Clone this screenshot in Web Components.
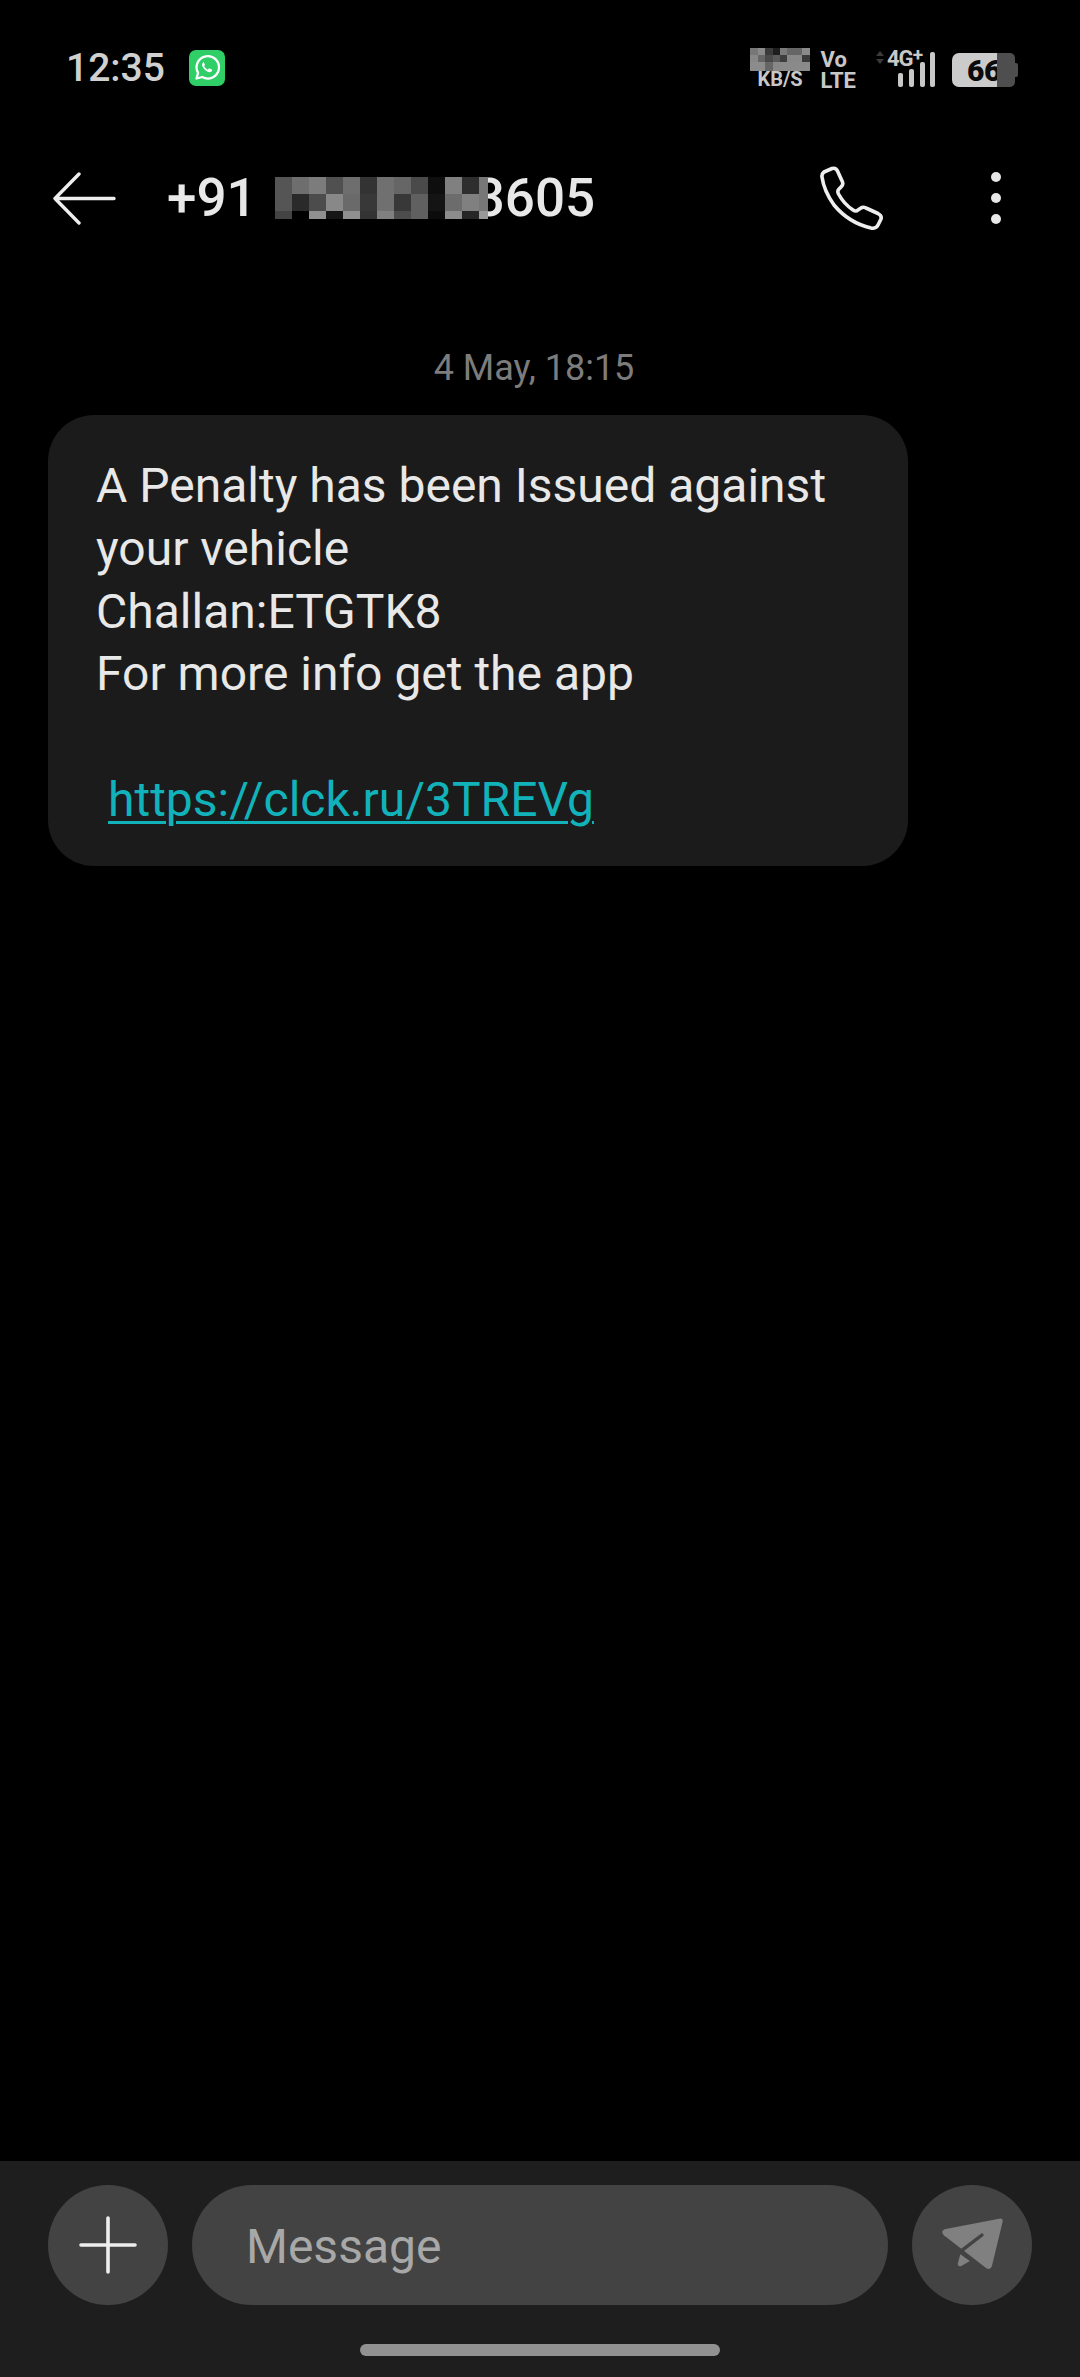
<!DOCTYPE html>
<html>
<head>
<meta charset="utf-8">
<style>
  html, body { margin:0; padding:0; background:#000; }
  body { font-family:Roboto, "Liberation Sans", sans-serif; }
</style>
</head>
<body>
<chat-screen>
  <status-bar slot="status"></status-bar>
  <chat-header slot="header"></chat-header>
  <msg-bubble date="4 May, 18:15">A Penalty has been Issued against
your vehicle
Challan:ETGTK8
For more info get the app<a href="#">https://clck.ru/3TREVg</a></msg-bubble>
  <msg-composer slot="composer"></msg-composer>
</chat-screen>

<script>
  // blurred squares that hide part of the number
  class PixelMosaic extends HTMLElement {
    connectedCallback() {
      const shadow = this.attachShadow({mode: 'open'});
      const cols = this.getAttribute('cols');
      const rows = this.getAttribute('rows');
      const colors = this.getAttribute('colors').trim().split(/\s+/);
      shadow.innerHTML = `
        <style>
          :host { display:inline-grid; grid-template-columns:${cols}; grid-template-rows:${rows}; }
        </style>
        ${colors.map(c => `<i style="background:${c}"></i>`).join('')}
      `;
    }
  }
  customElements.define('pixel-mosaic', PixelMosaic);

  class ChatScreen extends HTMLElement {
    connectedCallback() {
      const shadow = this.attachShadow({mode: 'open'});
      shadow.innerHTML = `
        <style>
          :host { display:flex; flex-direction:column; height:2377px; background:#000; color:#eee; overflow:hidden; }
          main { flex:1; padding:84px 0 0 48px; }
        </style>
        <slot name="status"></slot>
        <slot name="header"></slot>
        <main><slot></slot></main>
        <slot name="composer"></slot>
      `;
    }
  }
  customElements.define('chat-screen', ChatScreen);

  class StatusBar extends HTMLElement {
    connectedCallback() {
      const shadow = this.attachShadow({mode: 'open'});
      shadow.innerHTML = `
        <style>
          :host { display:flex; align-items:center; height:136px; padding:0 62px 0 66px; box-sizing:border-box; }
          .time { font-size:39px; font-weight:500; color:#d0d0d0; }
          .wa { margin-left:24px; display:block; }
          .right { margin-left:auto; display:flex; align-items:flex-start; height:38px; color:#c8c8c8; font-weight:700; font-size:20px; line-height:15px; }
          .speed { display:flex; flex-direction:column; align-items:center; width:59px; margin-top:-1px; }
          .speed span { margin-top:1px; }
          .volte { margin-left:11px; margin-top:0; line-height:21px; font-size:22px; }
          .net { margin-left:20px; position:relative; width:62px; height:38px; margin-top:1px; }
          .net svg { display:block; }
          .net span { position:absolute; left:11px; top:1px; font-size:22px; letter-spacing:-1px; }
          .net sup { font-size:19px; line-height:0; vertical-align:5px; }
          .batt { margin-left:14px; display:flex; align-items:center; width:66px; height:34px; margin-top:4px; }
          .batt b { display:flex; align-items:center; padding-left:15px; width:45px; height:34px; box-sizing:border-box; background:#cbcbcb; border-radius:7px 0 0 7px; color:#0c0c0c; font-size:30px; letter-spacing:-.5px; white-space:nowrap; }
          .batt i { display:block; width:18px; height:34px; background:#4e4e4e; border-radius:0 5px 5px 0; }
          .batt u { display:block; width:3px; height:14px; background:#4e4e4e; border-radius:0 2px 2px 0; }
        </style>
        <span class="time">12:35</span>
        <svg class="wa" width="36" height="36" viewBox="0 0 36 36">
          <rect width="36" height="36" rx="7" fill="#2fce67"/>
          <path d="M7.500 28.500l1.600-5.600a11.200 11.200 0 1 1 4.100 4.100z" fill="none" stroke="#fff" stroke-width="2.300" stroke-linejoin="round"/>
          <path d="M14.200 12.400c-1.400 1.100-1.500 2.900-.3 4.900 1.300 2.200 3.300 4 5.500 4.700 1.700.5 3.100 0 3.700-1.200.2-.6.1-1-.3-1.200l-2.200-1.100c-.4-.2-.7-.1-1 .3l-.7.9c-1.600-.6-3-1.900-3.800-3.400l.6-.8c.2-.3.2-.6.1-.9l-.9-2.100c-.2-.5-.6-.6-1.100-.6z" fill="#fff"/>
        </svg>
        <div class="right">
          <div class="speed">
            <pixel-mosaic cols="repeat(8,7.4px)" rows="7px 7px 9px" colors="
              #777 #8a8a8a #3a3a3a #1e1e1e #7a7a7a #666 #666 #8a8a8a
              #888 #666 #4a4a4a #5a5a5a #3e3e3e #888 #888 #3a3a3a
              #8c8c8c #8c8c8c #666 #888 #8a8a8a #8a8a8a #8a8a8a #8a8a8a"></pixel-mosaic>
            <span>KB/S</span>
          </div>
          <div class="volte"><div>Vo</div><div>LTE</div></div>
          <div class="net">
            <svg width="62" height="38" viewBox="0 0 62 38">
              <path d="M0 6l4-5 4 5zM0 9l4 5 4-5z" fill="#3a3a3a"/>
              <rect x="22" y="23" width="5" height="14" rx="2" fill="#c8c8c8"/>
              <rect x="33" y="19" width="5" height="18" rx="2" fill="#c8c8c8"/>
              <rect x="44" y="12" width="5" height="25" rx="2" fill="#c8c8c8"/>
              <rect x="54" y="2" width="5" height="35" rx="2" fill="#c8c8c8"/>
            </svg>
            <span>4G<sup>+</sup></span>
          </div>
          <div class="batt"><b>66</b><i></i><u></u></div>
        </div>
      `;
    }
  }
  customElements.define('status-bar', StatusBar);

  class ChatHeader extends HTMLElement {
    connectedCallback() {
      const shadow = this.attachShadow({mode: 'open'});
      shadow.innerHTML = `
        <style>
          :host { display:flex; align-items:center; height:124px; padding-left:52px; box-sizing:border-box; color:#e8e8e8; }
          .title { margin-left:51px; font-size:53px; font-weight:500; white-space:nowrap; display:flex; align-items:center; }
          pixel-mosaic { margin:0 -13px 0 18px; position:relative; }
          .phone { margin-left:auto; display:block; }
          .dots { margin:0 79px 0 107px; display:flex; flex-direction:column; gap:11px; }
          .dots i { display:block; width:10px; height:10px; border-radius:50%; background:#e8e8e8; }
        </style>
        <svg width="64" height="53" viewBox="0 0 64 53" fill="none" stroke="#eee" stroke-width="3.400" stroke-linecap="round" stroke-linejoin="round">
          <path d="M62 26.500H3M27 2L3 26.500 27 51"/>
        </svg>
        <div class="title">+91<pixel-mosaic cols="repeat(12,17px) 9px" rows="17px 17px 8px" colors="
          #555 #6e6e6e #7c7c7c #505050 #6e6e6e #333 #707070 #666 #4a4a4a #0e0e0e #808080 #2e2e2e #777
          #555 #2a2a2a #4c4c4c #888 #6a6a6a #383838 #707070 #383838 #606060 #141414 #6c6c6c #808080 #777
          #444 #000 #909090 #161616 #909090 #333 #808080 #4c4c4c #606060 #0c0c0c #8c8c8c #262626 #999"></pixel-mosaic>3605</div>
        <svg class="phone" width="64" height="64" viewBox="0 0 64 64" fill="none" stroke="#eee" stroke-width="3.600" stroke-linejoin="round">
          <path d="M4 6L12 2.500Q16 1.500 17.500 5L22.500 16Q23.500 19 21 21L19 23Q17 25 18.500 28Q24 38 33 44Q36 46 38 44L41 42Q43 40.500 46 42L58 47.500Q62 49.500 61 53L58 59Q56 63 51 62Q29 57 14 39Q4 25 2 11Q1.500 8 4 6Z"/>
        </svg>
        <div class="dots"><i></i><i></i><i></i></div>
      `;
    }
  }
  customElements.define('chat-header', ChatHeader);

  class MsgBubble extends HTMLElement {
    connectedCallback() {
      const shadow = this.attachShadow({mode: 'open'});
      shadow.innerHTML = `
        <style>
          :host { display:block; }
          .date { margin-left:-48px; width:1080px; padding:1px 12px 0 0; box-sizing:border-box; text-align:center; font-size:36px; line-height:47px; color:#7c7c7c; margin-bottom:23px; }
          .bubble { width:860px; height:451px; box-sizing:border-box; padding:40px 0 0 48px; background:#1b1b1b; border-radius:46px; font-size:48px; line-height:62.800px; color:#e8e8e8; white-space:pre-wrap; }
          ::slotted(a) { display:block; width:fit-content; margin:62.800px 0 0 12px; color:#12b2ba; text-decoration:underline; text-decoration-thickness:3px; text-underline-offset:5px; }
        </style>
        <div class="date">${this.getAttribute('date')}</div>
        <div class="bubble"><slot></slot></div>
      `;
    }
  }
  customElements.define('msg-bubble', MsgBubble);

  class MsgComposer extends HTMLElement {
    connectedCallback() {
      const shadow = this.attachShadow({mode: 'open'});
      shadow.innerHTML = `
        <style>
          :host { display:flex; flex-direction:column; align-items:center; height:216px; background:#1e1e1e; padding-top:24px; box-sizing:border-box; }
          .row { display:flex; align-items:center; gap:24px; width:984px; }
          .round { flex:none; width:120px; height:120px; border-radius:50%; background:#434343; display:flex; align-items:center; justify-content:center; }
          .input { flex:1; height:120px; border-radius:60px; background:#434343; display:flex; align-items:center; padding:2px 0 0 54px; box-sizing:border-box; font-size:48px; color:#a8a8a8; }
          .home { width:360px; height:12px; border-radius:6px; background:#929292; margin-top:39px; }
        </style>
        <div class="row">
          <div class="round">
            <svg width="58" height="58" viewBox="0 0 58 58" stroke="#eee" stroke-width="3.600" stroke-linecap="round"><path d="M29 2v54M2 29h54"/></svg>
          </div>
          <div class="input">Message</div>
          <div class="round">
            <svg width="67" height="55" viewBox="1160 230 195 165" preserveAspectRatio="none" style="margin-top:-3px">
              <path d="M1176 270L1335 238Q1347 236 1345 248L1314 380Q1310 394 1298 387L1174 288Q1164 276 1176 270Z" fill="#808080"/>
              <path d="M1222 345L1250 365 1225 380Q1214 384 1215 372Z" fill="#808080"/>
              <path d="M1285 287L1222 337" stroke="#434343" stroke-width="10" stroke-linecap="round"/>
              <path d="M1222 337L1250 360" stroke="#434343" stroke-width="8"/>
            </svg>
          </div>
        </div>
        <div class="home"></div>
      `;
    }
  }
  customElements.define('msg-composer', MsgComposer);
</script>
</body>
</html>
